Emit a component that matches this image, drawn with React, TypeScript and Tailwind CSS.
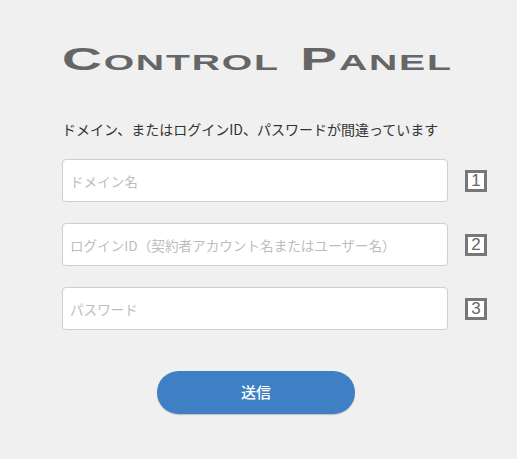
const FIELDS = [
  { placeholder: "ドメイン名", type: "text", no: 1 },
  { placeholder: "ログインID（契約者アカウント名またはユーザー名）", type: "text", no: 2 },
  { placeholder: "パスワード", type: "password", no: 3 },
];

export default function App() {
  return (
    <div
      className="min-h-[459px] w-full bg-[#f0f0f0] text-[#333]"
      style={{ fontFamily: '"Noto Sans CJK JP", "Noto Sans", sans-serif' }}
    >
      <div className="pl-[62px] pt-[46px]">
        {/* Logo */}
        <div className="h-[28px]">
          <span
            className="inline-block origin-left scale-x-[1.78] text-[31px] leading-[28px] font-bold tracking-[1px] text-[#666] [font-variant:small-caps] whitespace-nowrap"
            style={{ fontFamily: '"Liberation Sans", Arial, sans-serif' }}
          >
            Control <span className="ml-[2px]">Panel</span>
          </span>
        </div>

        <p className="mt-[46px] text-[14px] leading-[19px]">
          ドメイン、またはログインID、パスワードが間違っています
        </p>

        <form className="mt-[20px] flex flex-col gap-[21px]" onSubmit={(e) => e.preventDefault()}>
          {FIELDS.map((f) => (
            <div key={f.no} className="flex items-center">
              <input
                type={f.type}
                placeholder={f.placeholder}
                className="h-[43px] w-[386px] rounded-[4px] border border-[#cfcfcf] bg-white px-[7px] text-[13.6px] placeholder:text-[#bdbdbd] outline-none"
              />
              <span
                className="ml-[17px] flex h-[22px] w-[22px] items-center justify-center border-[3px] border-[#777] bg-white text-[17px] leading-none text-[#666]"
                style={{ fontFamily: '"Liberation Sans", Arial, sans-serif' }}
              >
                {f.no}
              </span>
            </div>
          ))}

          <button
            type="submit"
            className="ml-[95px] mt-[20px] h-[43px] w-[198px] rounded-full bg-[#3f7fc4] text-[15px] font-medium text-white shadow-[0_1px_1px_rgba(0,0,0,0.2)]"
          >
            送信
          </button>
        </form>
      </div>
    </div>
  );
}
